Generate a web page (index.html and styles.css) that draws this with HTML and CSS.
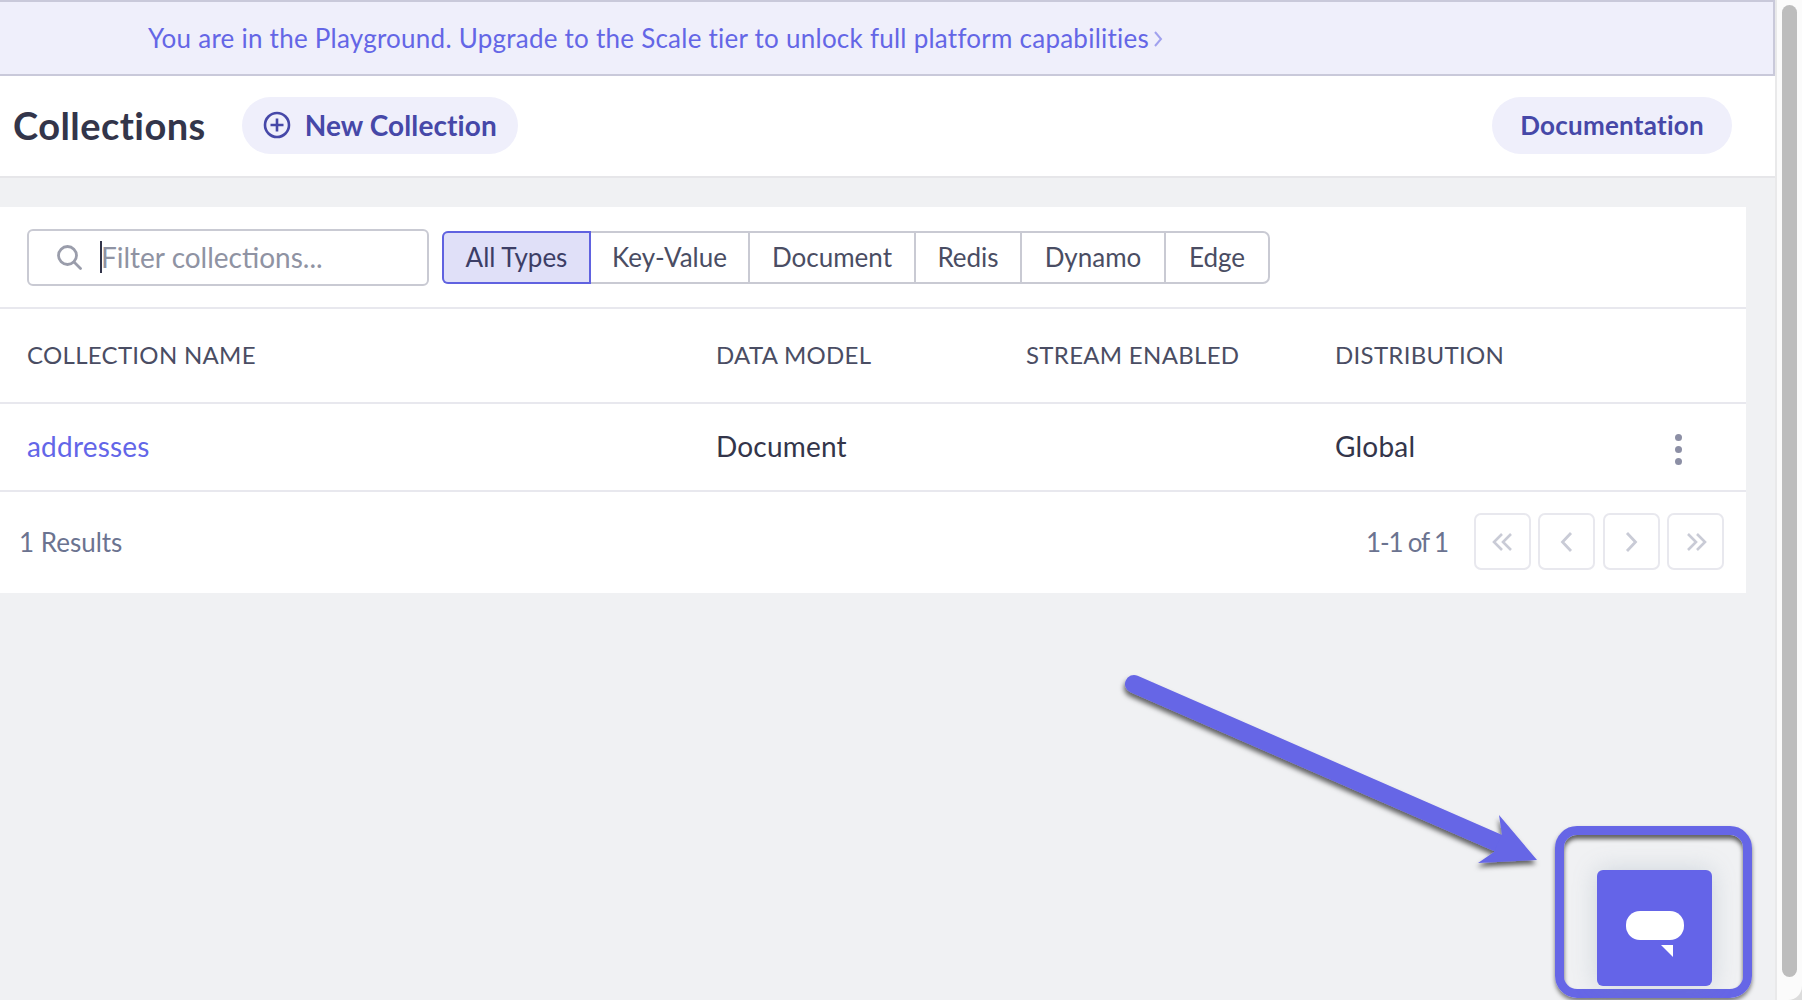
FILE: index.html
```
<!DOCTYPE html>
<html lang="en">
<head>
<meta charset="utf-8">
<title>Collections</title>
<link rel="stylesheet" href="styles.css">
</head>
<body>
<div class="app">
  <main class="page">
    <div class="banner"><span>You are in the Playground. Upgrade to the Scale tier to unlock full platform capabilities</span><svg class="banner-chev" viewBox="0 0 10 20" width="10" height="20"><path d="M2 3l6 7-6 7" fill="none" stroke="#a0a1ee" stroke-width="2"/></svg></div>
    <header class="topbar">
      <h1 class="title">Collections</h1>
      <button class="pill pill-new"><svg class="plus" viewBox="0 0 28 28" width="28" height="28"><circle cx="14" cy="14" r="12" fill="none" stroke="#4648a8" stroke-width="2.6"/><path d="M14 7.500v13M7.500 14h13" stroke="#4648a8" stroke-width="2.600"/></svg>New Collection</button>
      <button class="pill pill-doc">Documentation</button>
    </header>
    <section class="card">
      <div class="filters">
        <div class="search">
          <svg viewBox="0 0 26 26" width="26" height="26"><circle cx="11.5" cy="11.5" r="9" fill="none" stroke="#9a9dab" stroke-width="2.8"/><path d="M18 18l6.500 6.500" stroke="#9a9dab" stroke-width="2.800" stroke-linecap="round"/></svg>
          <span class="caret"></span><span class="placeholder">Filter collections...</span>
        </div>
        <div class="seg">
          <span class="seg-item seg-on seg-1">All Types</span>
          <span class="seg-item seg-2">Key-Value</span>
          <span class="seg-item seg-3">Document</span>
          <span class="seg-item seg-4">Redis</span>
          <span class="seg-item seg-5">Dynamo</span>
          <span class="seg-item seg-6">Edge</span>
        </div>
      </div>
      <div class="grid thead">
        <span>COLLECTION NAME</span><span>DATA MODEL</span><span>STREAM ENABLED</span><span>DISTRIBUTION</span>
      </div>
      <div class="grid trow">
        <a class="link">addresses</a><span>Document</span><span></span>
        <span class="dist"><span>Global</span><span class="kebab"><i></i><i></i><i></i></span></span>
      </div>
      <div class="foot">
        <span class="results">1 Results</span>
        <div class="pager">
          <span class="range">1-1 of 1</span>
          <span class="pg"><svg viewBox="0 0 24 24" width="24" height="24"><path d="M11 4l-8 8 8 8M20 4l-8 8 8 8" fill="none" stroke="#c9cbd6" stroke-width="2.600"/></svg></span>
          <span class="pg"><svg viewBox="0 0 24 24" width="24" height="24"><path d="M16 3l-8.500 9 8.500 9" fill="none" stroke="#c9cbd6" stroke-width="2.800"/></svg></span>
          <span class="pg"><svg viewBox="0 0 24 24" width="24" height="24"><path d="M8 3l8.500 9-8.500 9" fill="none" stroke="#c9cbd6" stroke-width="2.800"/></svg></span>
          <span class="pg"><svg viewBox="0 0 24 24" width="24" height="24"><path d="M4 4l8 8-8 8M13 4l8 8-8 8" fill="none" stroke="#c9cbd6" stroke-width="2.600"/></svg></span>
        </div>
      </div>
    </section>
  </main>
  <aside class="scroll"><div class="thumb"></div></aside>
</div>
<svg class="arrow" viewBox="0 0 1802 1000" width="1802" height="1000">
  <defs><filter id="sh" x="-10%" y="-10%" width="120%" height="130%"><feDropShadow dx="-1" dy="4" stdDeviation="2.500" flood-color="#000" flood-opacity=".6"/></filter></defs>
  <g filter="url(#sh)">
    <path d="M1134 684L1498 843" stroke="#6666e6" stroke-width="18" stroke-linecap="round" fill="none"/>
    <path d="M1499 815L1537 860L1478 863L1494 852L1498 843L1502 835Z" fill="#6666e6"/>
  </g>
</svg>
<div class="frame"></div>
<div class="chat">
  <svg viewBox="0 0 60 50" width="60" height="50"><rect x="1" y="0" width="58" height="29" rx="14" fill="#fff"/><path d="M36 34h12v12z" fill="#fff"/></svg>
</div>
</body>
</html>
```
FILE: styles.css
```
* { box-sizing: border-box; }
html, body { margin: 0; height: 100%; overflow: hidden; }
body { font-family: "Lato", "Liberation Sans", sans-serif; background: #f0f1f3; color: #33354a; position: relative; }
.app { display: flex; height: 1000px; background: #dcdcdc; }
.page { width: 1775px; flex: none; background: #f0f1f3; }
.scroll { flex: 1; background: #fbfbfb; border-left: 2px solid #e9e9ea; border-bottom-right-radius: 14px; padding: 5px 5px 23px 5px; }
.thumb { height: 100%; background: #bdbdbd; border-radius: 8px; }

.banner { height: 76px; background: #efeffb; border: solid #c9c9da; border-width: 2px 2px 2px 0; padding: 0 0 0 148px; display: flex; align-items: center; gap: 4px; color: #6466e6; font-size: 26px; letter-spacing: .245px; }
.banner-chev { flex: none; margin-top: 2px; }

.topbar { height: 102px; background: #fff; border-bottom: 2px solid #e6e6e9; display: flex; align-items: center; padding: 0 43px 2px 13px; }
.title { margin: 0 36px 0 0; font-size: 38px; font-weight: 700; letter-spacing: .45px; color: #33354a; }
.pill { height: 57px; border: 0; border-radius: 29px; background: #efeffb; color: #4648a8; font: 700 28px "Lato", sans-serif; display: flex; align-items: center; }
.pill-new { width: 276px; padding: 0 0 0 21px; gap: 14px; letter-spacing: .1px; }
.pill-doc { width: 240px; margin-left: auto; justify-content: center; font-size: 26px; letter-spacing: .25px; }

.card { margin: 29px 29px 0 0; background: #fff; height: 386px; }
.filters { height: 102px; border-bottom: 2px solid #e8e8ee; display: flex; align-items: center; padding: 0 0 0 27px; }
.search { width: 402px; height: 57px; border: 2px solid #c9cad3; border-radius: 6px; display: flex; align-items: center; padding-left: 27px; margin: 0 13px 0 0; }
.caret { width: 2px; height: 32px; background: #33354a; margin-left: 18px; }
.placeholder { color: #8f93a3; font-size: 28px; margin-left: -1px; padding-bottom: 1px; }
.seg { display: flex; height: 53px; border: 2px solid #c9cad3; border-radius: 7px; }
.seg-item { display: flex; align-items: center; justify-content: center; font-size: 26px; color: #4a4d63; border-right: 2px solid #c9cad3; padding-bottom: 1px; }
.seg-1 { width: 149px; } .seg-2 { width: 159px; } .seg-3 { width: 166px; } .seg-4 { width: 106px; } .seg-5 { width: 144px; } .seg-6 { width: 102px; border-right: 0; }
.seg-on { background: #e0e0f8; color: #3c3e66; box-shadow: inset 0 0 0 2px #6062e0; border-right: 0; border-radius: 6px 0 0 6px; margin: -2px 0 -2px -2px; }

.grid { display: grid; grid-template-columns: 689px 310px 309px 1fr; padding-left: 27px; align-items: center; }
.thead { height: 95px; padding-bottom: 2px; border-bottom: 2px solid #e8e8ee; font-size: 24px; letter-spacing: .3px; color: #4a4d63; }
.trow { height: 88px; padding-bottom: 2px; border-bottom: 2px solid #e8e8ee; font-size: 28px; letter-spacing: .2px; color: #33354a; }
.link { color: #6366e8; }
.dist { display: flex; justify-content: space-between; align-items: center; padding-right: 64px; }
.kebab { display: flex; flex-direction: column; gap: 5px; margin-top: 6px; }
.kebab i { width: 7px; height: 7px; border-radius: 50%; background: #8c8fa5; }

.foot { height: 99px; display: flex; align-items: center; justify-content: space-between; padding: 0 22px 0 19px; font-size: 26px; color: #6b7390; }
.pager { display: flex; align-items: center; gap: 7.3px; }
.range { margin-right: 19px; letter-spacing: -1.2px; }
.pg { width: 57px; height: 57px; border: 2px solid #e8e8ee; border-radius: 7px; display: flex; align-items: center; justify-content: center; }

.arrow { position: absolute; left: 0; top: 0; pointer-events: none; }
.frame { position: absolute; left: 1555px; top: 826px; width: 197px; height: 172px; border: 9px solid #6666e6; border-radius: 22px; box-shadow: 0 3px 4px rgba(0,0,0,.5), inset 0 4px 4px rgba(0,0,0,.6); }
.chat { position: absolute; left: 1597px; top: 870px; width: 115px; height: 116px; background: #6464e8; border-radius: 6px; box-shadow: 0 0 24px rgba(120,140,160,.28); display: flex; align-items: flex-start; justify-content: center; padding-top: 41px; }
```
